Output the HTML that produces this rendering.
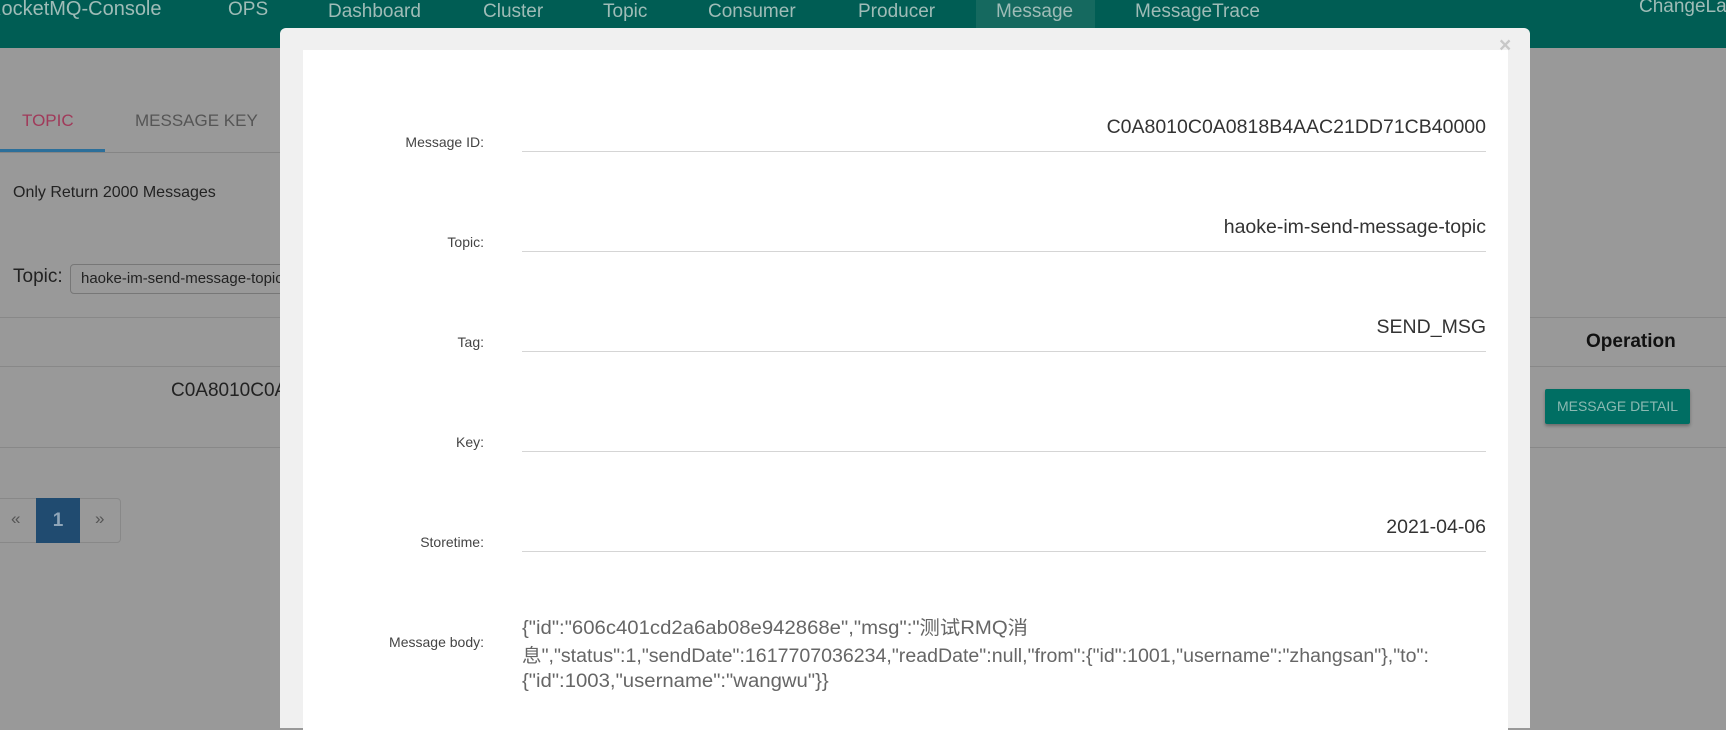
<!DOCTYPE html>
<html><head><meta charset="utf-8"><style>
*{margin:0;padding:0;box-sizing:border-box}
body{width:1726px;height:711px;overflow:hidden;background:#999;font-family:"Liberation Sans","Noto Sans CJK SC",sans-serif;position:relative}
.a{position:absolute;white-space:nowrap}
.nav{position:absolute;left:0;top:0;width:1726px;height:48px;background:#005d54}
.nt{position:absolute;top:1px;font-size:19px;color:#9fbcb7}
.lbl{position:absolute;right:1242px;font-size:14px;color:#444;text-align:right;white-space:nowrap}
.ln{position:absolute;left:522px;width:964px;height:1px;background:#d5d5d5}
.val{position:absolute;right:240px;font-size:19.5px;color:#333;white-space:nowrap}
.hl{position:absolute;left:0;width:280px;height:1px;background:#888}
.bl{position:absolute;left:522px;white-space:nowrap;font-size:19px;color:#666;transform-origin:0 0;transform:scaleX(1.07)}
</style></head><body>
<div class="nav">
<div class="nt" style="left:-13px;font-size:20px;top:-2px">RocketMQ-Console</div>
<div class="nt" style="left:228px;top:-1px">OPS</div>
<div class="nt" style="left:328px">Dashboard</div>
<div class="nt" style="left:483px">Cluster</div>
<div class="nt" style="left:603px">Topic</div>
<div class="nt" style="left:708px">Consumer</div>
<div class="nt" style="left:858px">Producer</div>
<div style="position:absolute;left:976px;top:0;width:119px;height:28px;background:#15695f"></div>
<div class="nt" style="left:996px">Message</div>
<div class="nt" style="left:1135px">MessageTrace</div>
<div class="nt" style="left:1639px;top:-4px">ChangeLanguage</div>
</div>
<div class="a" style="left:22px;top:111px;font-size:17px;color:#a03a5a">TOPIC</div>
<div class="a" style="left:135px;top:111px;font-size:17px;color:#555">MESSAGE KEY</div>
<div class="hl" style="top:152px;background:#858585"></div>
<div style="position:absolute;left:0;top:149px;width:105px;height:3px;background:#2c6f9a"></div>
<div class="a" style="left:13px;top:184px;font-size:16px;color:#222">Only Return 2000 Messages</div>
<div class="a" style="left:13px;top:266px;font-size:19px;color:#222">Topic:</div>
<div style="position:absolute;left:70px;top:264px;width:240px;height:30px;border:1px solid #777;border-radius:4px;background:#999"></div>
<div class="a" style="left:81px;top:270px;font-size:15px;color:#222">haoke-im-send-message-topic</div>
<div class="hl" style="top:317px"></div>
<div class="hl" style="top:366px"></div>
<div class="a" style="left:171px;top:380px;font-size:19px;color:#222">C0A8010C0A0818</div>
<div class="hl" style="top:447px"></div>
<div style="position:absolute;left:-6px;top:498px;width:127px;height:45px;border:1px solid #888;border-radius:4px"></div>
<div class="a" style="left:11px;top:509px;font-size:17px;color:#555">«</div>
<div style="position:absolute;left:36px;top:498px;width:44px;height:45px;background:#204b70;color:#8fa5b8;font-size:19px;text-align:center;line-height:45px;font-weight:bold">1</div>
<div class="a" style="left:95px;top:509px;font-size:17px;color:#555">»</div>
<div style="position:absolute;left:1530px;top:317px;width:196px;height:1px;background:#888"></div>
<div style="position:absolute;left:1530px;top:366px;width:196px;height:1px;background:#888"></div>
<div style="position:absolute;left:1530px;top:447px;width:196px;height:1px;background:#888"></div>
<div class="a" style="left:1586px;top:331px;font-size:19px;font-weight:bold;color:#111">Operation</div>
<div style="position:absolute;left:1545px;top:389px;width:145px;height:35px;background:#006e63;border-radius:2px;box-shadow:0 2px 3px rgba(0,0,0,.3);color:#8cb9b2;font-size:14px;text-align:center;line-height:35px">MESSAGE DETAIL</div>

<div style="position:absolute;left:280px;top:28px;width:1250px;height:700px;background:#f0f0f0;border-radius:6px 6px 0 0"></div>
<div style="position:absolute;left:303px;top:50px;width:1205px;height:680px;background:#fff"></div>
<div class="a" style="left:1499px;top:34px;font-size:21px;color:#c8c8c8;font-weight:bold">×</div>

<div class="lbl" style="top:134px">Message ID:</div>
<div class="lbl" style="top:234px">Topic:</div>
<div class="lbl" style="top:334px">Tag:</div>
<div class="lbl" style="top:434px">Key:</div>
<div class="lbl" style="top:534px">Storetime:</div>
<div class="lbl" style="top:634px">Message body:</div>
<div class="ln" style="top:151px"></div>
<div class="ln" style="top:251px"></div>
<div class="ln" style="top:351px"></div>
<div class="ln" style="top:451px"></div>
<div class="ln" style="top:551px"></div>
<div class="val" style="top:116px">C0A8010C0A0818B4AAC21DD71CB40000</div>
<div class="val" style="top:216px">haoke-im-send-message-topic</div>
<div class="val" style="top:316px">SEND_MSG</div>
<div class="val" style="top:516px">2021-04-06</div>
<div class="bl" style="top:613px">{"id":"606c401cd2a6ab08e942868e","msg":"测试RMQ消</div>
<div class="bl" style="top:641px;transform:scaleX(1.03)">息","status":1,"sendDate":1617707036234,"readDate":null,"from":{"id":1001,"username":"zhangsan"},"to":</div>
<div class="bl" style="top:671px">{"id":1003,"username":"wangwu"}}</div>
</body></html>
